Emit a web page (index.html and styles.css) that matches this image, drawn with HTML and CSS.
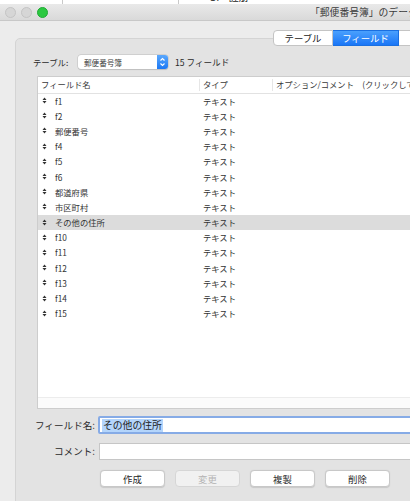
FILE: index.html
```html
<!DOCTYPE html>
<html lang="ja">
<head>
<meta charset="utf-8">
<title>データベース定義</title>
<link rel="stylesheet" href="styles.css">
</head>
<body>
<div class="behind">
  <div class="bcell b1"></div>
  <div class="bcell b2"></div>
  <div class="btext">Gl　註册</div>
</div>
<div class="window">
  <div class="titlebar">
    <div class="lights">
      <span class="light"></span><span class="light"></span><span class="light green"></span>
    </div>
    <div class="title">「郵便番号簿」のデータベース定義</div>
  </div>
  <div class="content">
    <div class="tabs">
      <span class="seg first">テーブル</span><span class="seg active">フィールド</span><span class="seg">リレーションシップ</span>
    </div>
    <div class="panel">
      <div class="tablerow">
        <span class="lbl">テーブル:</span>
        <div class="popup">
          <span class="popup-text">郵便番号簿</span>
          <span class="stepper">
            <svg width="11" height="14" viewBox="0 0 11 14"><path d="M3.5 5.5 L5.5 3.5 L7.5 5.5 M3.5 8.5 L5.5 10.5 L7.5 8.5" fill="none" stroke="#fff" stroke-width="1.1"/></svg>
          </span>
        </div>
        <span class="count">15 フィールド</span>
      </div>
      <div class="grid">
        <div class="thead">
          <div class="th c1">フィールド名</div>
          <div class="th c2">タイプ</div>
          <div class="th c3">オプション/コメント　(クリックして切り替え)</div>
        </div>
        <div class="tbody">
          <div class="row"><span class="cell c1"><svg class="handle" width="5" height="7" viewBox="0 0 5 7"><path d="M0.5 3 L2.5 0.5 L4.5 3 Z M0.5 4 L2.5 6.5 L4.5 4 Z" fill="#333"/></svg>f1</span><span class="cell c2">テキスト</span></div>
          <div class="row"><span class="cell c1"><svg class="handle" width="5" height="7" viewBox="0 0 5 7"><path d="M0.5 3 L2.5 0.5 L4.5 3 Z M0.5 4 L2.5 6.5 L4.5 4 Z" fill="#333"/></svg>f2</span><span class="cell c2">テキスト</span></div>
          <div class="row"><span class="cell c1"><svg class="handle" width="5" height="7" viewBox="0 0 5 7"><path d="M0.5 3 L2.5 0.5 L4.5 3 Z M0.5 4 L2.5 6.5 L4.5 4 Z" fill="#333"/></svg>郵便番号</span><span class="cell c2">テキスト</span></div>
          <div class="row"><span class="cell c1"><svg class="handle" width="5" height="7" viewBox="0 0 5 7"><path d="M0.5 3 L2.5 0.5 L4.5 3 Z M0.5 4 L2.5 6.5 L4.5 4 Z" fill="#333"/></svg>f4</span><span class="cell c2">テキスト</span></div>
          <div class="row"><span class="cell c1"><svg class="handle" width="5" height="7" viewBox="0 0 5 7"><path d="M0.5 3 L2.5 0.5 L4.5 3 Z M0.5 4 L2.5 6.5 L4.5 4 Z" fill="#333"/></svg>f5</span><span class="cell c2">テキスト</span></div>
          <div class="row"><span class="cell c1"><svg class="handle" width="5" height="7" viewBox="0 0 5 7"><path d="M0.5 3 L2.5 0.5 L4.5 3 Z M0.5 4 L2.5 6.5 L4.5 4 Z" fill="#333"/></svg>f6</span><span class="cell c2">テキスト</span></div>
          <div class="row"><span class="cell c1"><svg class="handle" width="5" height="7" viewBox="0 0 5 7"><path d="M0.5 3 L2.5 0.5 L4.5 3 Z M0.5 4 L2.5 6.5 L4.5 4 Z" fill="#333"/></svg>都道府県</span><span class="cell c2">テキスト</span></div>
          <div class="row"><span class="cell c1"><svg class="handle" width="5" height="7" viewBox="0 0 5 7"><path d="M0.5 3 L2.5 0.5 L4.5 3 Z M0.5 4 L2.5 6.5 L4.5 4 Z" fill="#333"/></svg>市区町村</span><span class="cell c2">テキスト</span></div>
          <div class="row selected"><span class="cell c1"><svg class="handle" width="5" height="7" viewBox="0 0 5 7"><path d="M0.5 3 L2.5 0.5 L4.5 3 Z M0.5 4 L2.5 6.5 L4.5 4 Z" fill="#333"/></svg>その他の住所</span><span class="cell c2">テキスト</span></div>
          <div class="row"><span class="cell c1"><svg class="handle" width="5" height="7" viewBox="0 0 5 7"><path d="M0.5 3 L2.5 0.5 L4.5 3 Z M0.5 4 L2.5 6.5 L4.5 4 Z" fill="#333"/></svg>f10</span><span class="cell c2">テキスト</span></div>
          <div class="row"><span class="cell c1"><svg class="handle" width="5" height="7" viewBox="0 0 5 7"><path d="M0.5 3 L2.5 0.5 L4.5 3 Z M0.5 4 L2.5 6.5 L4.5 4 Z" fill="#333"/></svg>f11</span><span class="cell c2">テキスト</span></div>
          <div class="row"><span class="cell c1"><svg class="handle" width="5" height="7" viewBox="0 0 5 7"><path d="M0.5 3 L2.5 0.5 L4.5 3 Z M0.5 4 L2.5 6.5 L4.5 4 Z" fill="#333"/></svg>f12</span><span class="cell c2">テキスト</span></div>
          <div class="row"><span class="cell c1"><svg class="handle" width="5" height="7" viewBox="0 0 5 7"><path d="M0.5 3 L2.5 0.5 L4.5 3 Z M0.5 4 L2.5 6.5 L4.5 4 Z" fill="#333"/></svg>f13</span><span class="cell c2">テキスト</span></div>
          <div class="row"><span class="cell c1"><svg class="handle" width="5" height="7" viewBox="0 0 5 7"><path d="M0.5 3 L2.5 0.5 L4.5 3 Z M0.5 4 L2.5 6.5 L4.5 4 Z" fill="#333"/></svg>f14</span><span class="cell c2">テキスト</span></div>
          <div class="row"><span class="cell c1"><svg class="handle" width="5" height="7" viewBox="0 0 5 7"><path d="M0.5 3 L2.5 0.5 L4.5 3 Z M0.5 4 L2.5 6.5 L4.5 4 Z" fill="#333"/></svg>f15</span><span class="cell c2">テキスト</span></div>
        </div>
        <div class="hscroll"></div>
      </div>
      <div class="form">
        <div class="frow">
          <span class="flabel">フィールド名:</span>
          <div class="field focused"><span class="sel">その他の住所</span></div>
        </div>
        <div class="frow second">
          <span class="flabel">コメント:</span>
          <div class="field plain"></div>
        </div>
        <div class="buttons">
          <span class="btn">作成</span>
          <span class="btn disabled">変更</span>
          <span class="btn">複製</span>
          <span class="btn">削除</span>
        </div>
      </div>
    </div>
  </div>
</div>
</body>
</html>
```
FILE: styles.css
```css
html, body {
  margin: 0;
  padding: 0;
}
body {
  width: 410px;
  height: 501px;
  overflow: hidden;
  background: #ececec;
  font-family: "Noto Sans CJK JP", "Noto Sans", "Liberation Sans", sans-serif;
  color: #262626;
}

.behind {
  display: flex;
  height: 4px;
  background: #ffffff;
  overflow: hidden;
}
.bcell {
  border-right: 1px solid #c9c9c9;
  height: 4px;
}
.b1 { width: 62px; }
.b2 { width: 115px; }
.btext {
  margin-left: 30px;
  margin-top: -9px;
  font-size: 10px;
  line-height: 12px;
  color: #222;
}

.window {
  width: 600px;
}
.titlebar {
  display: flex;
  align-items: center;
  height: 16px;
  background: linear-gradient(#e9e9e9, #d9d9d9);
  border-bottom: 1px solid #c8c8c8;
}
.lights {
  display: flex;
  gap: 5px;
  padding-left: 5px;
}
.light {
  width: 9px;
  height: 9px;
  border-radius: 50%;
  background: #d6d6d6;
  border: 1px solid #c4c4c4;
}
.light.green {
  background: #2bc840;
  border-color: #1faa34;
}
.title {
  margin-left: 262px;
  font-size: 9.8px;
  line-height: 16px;
  color: #3a3a3a;
  white-space: nowrap;
}

.content {
  padding-top: 9px;
  background: #ececec;
}
.tabs {
  display: flex;
  margin-left: 273px;
  margin-bottom: -8px;
  position: relative;
  z-index: 1;
  height: 16px;
}
.seg {
  display: flex;
  align-items: center;
  justify-content: center;
  height: 14px;
  padding: 0 10px;
  font-size: 9.4px;
  background: #ffffff;
  border: 1px solid #c4c4c4;
  border-left: none;
  color: #222;
  white-space: nowrap;
}
.seg.first {
  border-left: 1px solid #c4c4c4;
  border-radius: 4px 0 0 4px;
  width: 38px;
}
.seg.active {
  background: linear-gradient(#4aa0fd, #1a76f6);
  color: #ffffff;
  border-color: #1a6fe0;
  width: 45px;
}

.panel {
  margin-left: 15px;
  width: 560px;
  height: 480px;
  background: #e3e3e3;
  border: 1px solid #d4d4d4;
  border-radius: 5px;
  padding-top: 16px;
  box-sizing: border-box;
}
.tablerow {
  display: flex;
  align-items: center;
  height: 14px;
  padding-left: 17px;
}
.lbl {
  width: 45px;
  font-size: 8.4px;
  color: #2a2a2a;
}
.popup {
  display: flex;
  align-items: center;
  width: 90px;
  height: 14px;
  background: #fff;
  border-radius: 3px;
  box-shadow: 0 0 0 0.5px #bdbdbd, 0 0.5px 1px rgba(0,0,0,0.15);
}
.popup-text {
  flex: 1;
  padding-left: 6px;
  font-size: 7.6px;
  color: #3c3c3c;
}
.stepper {
  display: flex;
  width: 11px;
  height: 14px;
  background: linear-gradient(#5aa8fd, #1c78f4);
  border-radius: 0 3px 3px 0;
}
.count {
  margin-left: 7px;
  font-size: 8.6px;
  color: #2a2a2a;
}

.grid {
  margin-top: 7px;
  margin-left: 21px;
  width: 520px;
  height: 333px;
  background: #ffffff;
  border: 1px solid #cdcdcd;
  display: flex;
  flex-direction: column;
  box-sizing: border-box;
}
.thead {
  display: flex;
  height: 16px;
  border-bottom: 1px solid #e2e2e2;
  flex: none;
}
.th {
  font-size: 8.3px;
  line-height: 15px;
  color: #3a3a3a;
  white-space: nowrap;
  box-sizing: border-box;
}
.th.c1 { width: 161px; padding-left: 3px; }
.th.c2 { width: 73px; padding-left: 3px; border-left: 1px solid #e6e6e6; margin: 2px 0; line-height: 11px; }
.th.c3 { padding-left: 3px; border-left: 1px solid #e6e6e6; margin: 2px 0; line-height: 11px; }

.tbody {
  flex: 1;
  margin-top: -1px;
}
.row {
  display: flex;
  height: 15.2px;
  align-items: center;
  font-size: 8.3px;
  color: #333333;
}
.row.selected {
  background: #dcdcdc;
}
.cell {
  display: flex;
  align-items: center;
  white-space: nowrap;
  box-sizing: border-box;
}
.cell.c1 { width: 161px; padding-left: 4px; }
.cell.c2 { padding-left: 4px; }
.handle {
  margin-right: 8px;
  flex: none;
}
.hscroll {
  height: 10px;
  border-top: 1px solid #ececec;
  background: #fbfbfb;
  flex: none;
}

.form {
  padding-top: 7px;
}
.frow {
  display: flex;
  align-items: center;
  height: 18px;
}
.frow.second {
  margin-top: 8px;
}
.flabel {
  width: 79px;
  text-align: right;
  font-size: 9.6px;
  color: #2a2a2a;
  white-space: nowrap;
}
.field {
  height: 18px;
  width: 440px;
  background: #fff;
  box-sizing: border-box;
  display: flex;
  align-items: center;
}
.field.focused {
  margin-left: 3px;
  border: 2px solid #86abe6;
  border-radius: 2px;
  padding-left: 2px;
}
.field.plain {
  margin-left: 4px;
  height: 17px;
  border: 1px solid #c6c6c6;
}
.sel {
  background: #b4d5fb;
  font-size: 9.8px;
  line-height: 13px;
  color: #1e1e1e;
  padding: 0 1px;
}

.buttons {
  display: flex;
  gap: 10px;
  margin-top: 10px;
  margin-left: 84px;
}
.btn {
  width: 65px;
  height: 17px;
  box-sizing: border-box;
  display: flex;
  align-items: center;
  justify-content: center;
  background: #ffffff;
  border: 1px solid #c8c8c8;
  border-radius: 4px;
  box-shadow: 0 0.5px 1px rgba(0,0,0,0.12);
  font-size: 9.4px;
  color: #262626;
}
.btn.disabled {
  background: #f1f1f1;
  color: #b4b4b4;
  border-color: #d6d6d6;
  box-shadow: none;
}
```
